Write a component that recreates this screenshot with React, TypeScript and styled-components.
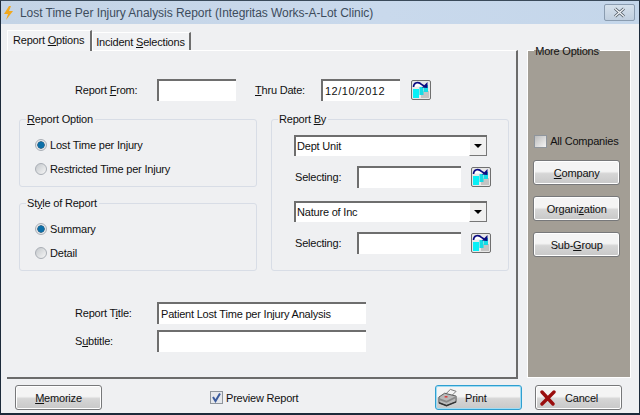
import { createGlobalStyle, styled } from 'styled-components';

const GlobalStyle = createGlobalStyle`
  html, body { margin: 0; padding: 0; background: #eef0f2; }
  * { box-sizing: border-box; }
  body { font-family: "Liberation Sans", Arial, sans-serif; font-size: 11px; letter-spacing: -0.2px; color: #111; }
`;

const Window = styled.div`
  width: 640px;
  height: 415px;
  overflow: hidden;
  display: flex;
  flex-direction: column;
  background: #eff0f2;
  border-left: 1px solid #1c2a3a;
  border-right: 1px solid #1c2a3a;
  border-bottom: 2px solid #1c2a3a;
  border-top: 1px solid #3a4a5a;
`;

const TitleBar = styled.div`
  height: 23px;
  flex: none;
  display: flex;
  align-items: center;
  padding: 0 4px 0 2px;
  background: linear-gradient(90deg, #c4d4e6 0%, #c9d9ec 60%, #c4d6ea 100%);
`;

const TitleText = styled.span`
  margin-left: 6px;
  font-size: 12px;
  letter-spacing: -0.05px;
  color: #3d4c5c;
`;

const CloseButton = styled.div`
  margin-left: auto;
  width: 31px;
  height: 17px;
  display: flex;
  align-items: center;
  justify-content: center;
  border: 1px solid #8a9cb0;
  border-radius: 2px;
  background: linear-gradient(#d6e1ec, #c0cfdf);
`;

const Content = styled.div`
  display: flex;
  padding: 6px 8px 0 5px;
  flex: none;
  height: 355px;
`;

const TabArea = styled.div`
  width: 513px;
  display: flex;
  flex-direction: column;
`;

const TabStrip = styled.div`
  display: flex;
  height: 20px;
  padding-left: 1px;
`;

const Tab = styled.div<{ $active?: boolean }>`
  display: flex;
  align-items: ${(p) => (p.$active ? 'flex-start' : 'flex-end')};
  height: ${(p) => (p.$active ? '21px' : '18px')};
  margin-top: ${(p) => (p.$active ? '0' : '2px')};
  padding: ${(p) => (p.$active ? '2px 6px 0 5px' : '0 4px 1px 3px')};
  background: #f1f2f4;
  border-top: 1px solid #fff;
  border-left: 1px solid #fff;
  border-right: 2px solid #6e6e6e;
  white-space: nowrap;
  line-height: 14px;
  position: relative;
  z-index: ${(p) => (p.$active ? 1 : 0)};
`;

const TabPage = styled.div`
  flex: 1;
  border-top: 1px solid #fff;
  border-right: 2px solid #6b6b6b;
  border-bottom: 2px solid #6b6b6b;
  margin-left: 1px;
  padding: 28px 0 0 0;
  display: flex;
  flex-direction: column;
`;

const FieldRow = styled.div`
  display: flex;
  align-items: center;
  height: 22px;
  padding-left: 68px;
`;

const Label = styled.label<{ $width?: number; $indent?: number }>`
  width: ${(p) => p.$width ?? 82}px;
  padding-left: ${(p) => p.$indent ?? 0}px;
  flex: none;
  line-height: 14px;
  white-space: nowrap;
`;

const TextBox = styled.div<{ $width: number; $track?: number }>`
  width: ${(p) => p.$width}px;
  height: 22px;
  flex: none;
  padding: 2px 0 0 2px;
  background: #fff;
  border-top: 2px solid #6e6e6e;
  border-left: 2px solid #6e6e6e;
  line-height: 16px;
  letter-spacing: ${(p) => p.$track ?? -0.2}px;
  white-space: nowrap;
  overflow: hidden;
`;

const GroupGrid = styled.div`
  display: grid;
  grid-template-columns: 238px 238px;
  column-gap: 14px;
  margin: 11px 0 0 12px;
`;

const GroupStack = styled.div`
  display: flex;
  flex-direction: column;
  gap: 9px;
`;

const Group = styled.fieldset<{ $height: number }>`
  margin: 0;
  height: ${(p) => p.$height}px;
  padding: 7px 0 0 15px;
  border: 1px solid #d8dde6;
  border-radius: 3px;
  min-width: 0;
`;

const GroupTitle = styled.legend`
  margin-left: -9px;
  padding: 0 2px 0 1px;
  line-height: 14px;
  height: 14px;
`;

const RadioRow = styled.div`
  display: flex;
  align-items: center;
  height: 24px;
  gap: 3px;
`;

const Radio = styled.span<{ $checked?: boolean }>`
  width: 12px;
  height: 12px;
  border-radius: 50%;
  flex: none;
  border: 1px solid #a9aeb5;
  background: ${(p) =>
    p.$checked
      ? 'radial-gradient(circle, #0c6fa8 0 3px, #2b5a78 3.4px, #e4e8ec 4px)'
      : 'linear-gradient(135deg, #c4c8cc, #f6f6f6)'};
`;

const ByRow = styled.div`
  display: flex;
  align-items: center;
  margin-top: 10px;
`;

const ComboBox = styled.div<{ $top: number }>`
  width: 193px;
  height: 21px;
  margin: ${(p) => p.$top}px 0 0 7px;
  display: flex;
  background: #fff;
  border-top: 2px solid #6e6e6e;
  border-left: 2px solid #6e6e6e;
  padding-left: 1px;
  line-height: 18px;
  justify-content: space-between;
`;

const ComboArrow = styled.div`
  width: 18px;
  height: 19px;
  background: #f0f0f0;
  border-right: 1px solid #777;
  border-bottom: 1px solid #777;
  border-left: 1px solid #fff;
  display: flex;
  align-items: center;
  justify-content: center;
`;

const ComboCaret = styled.span`
  border-left: 4px solid transparent;
  border-right: 4px solid transparent;
  border-top: 4px solid #000;
`;

const PickerButton = styled.button<{ $gap: number }>`
  width: 20px;
  height: 20px;
  flex: none;
  margin-left: ${(p) => p.$gap}px;
  padding: 0;
  border: 1px solid #6f6f6f;
  border-radius: 2px;
  background: #e8e8e8;
  display: block;
`;

const TitleFields = styled.div`
  margin-top: 31px;
  display: flex;
  flex-direction: column;
  gap: 6px;
`;

const SideArea = styled.div`
  margin-left: 9px;
  width: 104px;
  padding-top: 14px;
`;

const SidePanel = styled.fieldset`
  margin: 0;
  height: 334px;
  min-width: 0;
  padding: 0 0 0 6px;
  border: 1px solid #fff;
  background: #a39e95;
`;

const SideTitle = styled.legend`
  padding: 0 1px;
  line-height: 14px;
  height: 12px;
`;

const CheckRow = styled.div<{ $top?: number }>`
  display: flex;
  align-items: center;
  gap: 3px;
  margin-top: ${(p) => p.$top ?? 0}px;
  line-height: 14px;
`;

const CheckBox = styled.span<{ $tone: 'pale' | 'light' }>`
  width: 13px;
  height: 13px;
  flex: none;
  display: flex;
  align-items: center;
  justify-content: center;
  border: 1px solid #8f959c;
  background: ${(p) => (p.$tone === 'pale' ? 'linear-gradient(135deg, #bcbcbc, #f4f4f4)' : '#e6e8ec')};
`;

const SideButtons = styled.div`
  margin: 12px 0 0 -1px;
  display: flex;
  flex-direction: column;
  gap: 11px;
`;

const PushButton = styled.button<{ $focus?: boolean; $iconPad?: number; $gap?: number }>`
  width: 87px;
  height: 25px;
  padding: 0 0 0 ${(p) => p.$iconPad ?? 0}px;
  display: flex;
  align-items: center;
  justify-content: ${(p) => (p.$iconPad === undefined ? 'center' : 'flex-start')};
  gap: ${(p) => p.$gap ?? 0}px;
  font: inherit;
  letter-spacing: inherit;
  color: #111;
  border: 1px solid ${(p) => (p.$focus ? '#2f9fd0' : '#77787a')};
  border-radius: 3px;
  background: linear-gradient(#f4f4f4 0 45%, #d6d6d6 55%, #c8c8c8 100%);
  box-shadow: ${(p) => (p.$focus ? 'inset 0 0 0 1px #9fdcf4' : 'inset 0 0 0 1px #fff')};
`;

const Footer = styled.div`
  display: flex;
  align-items: center;
  height: 25px;
  margin-top: 6px;
  padding-left: 14px;
`;

const PreviewCheck = styled(CheckRow)`
  margin-left: 108px;
  width: 225px;
`;

const CancelSlot = styled.div`
  margin-left: 13px;
`;

function Picker({ gap }: { gap: number }) {
  return (
    <PickerButton $gap={gap} type="button">
      <svg width="18" height="18" viewBox="0 0 18 18">
        <rect x="9" y="10" width="8" height="7" fill="#c4c4c4" />
        <rect x="12" y="4" width="4" height="7" fill="#14dce6" />
        <rect x="7.5" y="6" width="4" height="8" fill="#14dce6" />
        <rect x="1" y="8" width="6" height="9" fill="#08f0f6" />
        <path d="M1.5 6 C1.5 1 7 0.5 9.5 3.5 L12 5" fill="#fff" stroke="#0a0a80" strokeWidth="1.6" />
        <path d="M15.5 1 L15.5 7 L10 6.5 Z" fill="#0a0a80" />
      </svg>
    </PickerButton>
  );
}

function PrintIcon() {
  return (
    <svg width="21" height="20" viewBox="0 0 22 20">
      <path d="M8 7 L14 1 L20 3 L14 9 Z" fill="#f4f4f4" stroke="#777" />
      <path d="M2 9 L8 5 L20 8 L20 14 L10 18 L2 15 Z" fill="#b9b9b9" stroke="#555" />
      <path d="M2 10 L10 13 L20 8 L20 10 L10 15 L2 12 Z" fill="#8b8b8b" />
      <path d="M2 15 L10 18 L20 14" fill="none" stroke="#333" strokeWidth="1.5" />
      <rect x="8" y="8" width="3" height="1.5" fill="#d33" />
    </svg>
  );
}

function CancelIcon() {
  return (
    <svg width="16" height="16" viewBox="0 0 16 16">
      <path d="M2 2 L13 14 M14 2 L2 14" stroke="#9a0d0d" strokeWidth="3.4" strokeLinecap="round" />
    </svg>
  );
}

function Bolt() {
  return (
    <svg width="11" height="14" viewBox="0 0 11 14">
      <path d="M6 0 L1 8 L5 8 L3 14 L10 5 L6 5 L8 0 Z" fill="#f0a81e" />
    </svg>
  );
}

export default function App() {
  return (
    <>
      <GlobalStyle />
      <Window>
        <TitleBar>
          <Bolt />
          <TitleText>Lost Time Per Injury Analysis Report (Integritas Works-A-Lot Clinic)</TitleText>
          <CloseButton>
            <svg width="13" height="11" viewBox="0 0 13 11">
              <path d="M2 1.5 L11 9.5 M11 1.5 L2 9.5" stroke="#4a5560" strokeWidth="3" />
              <path d="M2 1.5 L11 9.5 M11 1.5 L2 9.5" stroke="#f2f5f8" strokeWidth="1.4" />
            </svg>
          </CloseButton>
        </TitleBar>
        <Content>
          <TabArea>
            <TabStrip>
              <Tab $active>
                <span>Report <u>O</u>ptions</span>
              </Tab>
              <Tab>
                <span>Incident <u>S</u>elections</span>
              </Tab>
            </TabStrip>
            <TabPage>
              <FieldRow>
                <Label>Report <u>F</u>rom:</Label>
                <TextBox $width={79} />
                <Label $width={85} $indent={19}><u>T</u>hru Date:</Label>
                <TextBox $width={79} $track={0.5}>12/10/2012</TextBox>
                <Picker gap={11} />
              </FieldRow>
              <GroupGrid>
                <GroupStack>
                  <Group $height={75}>
                    <GroupTitle><u>R</u>eport Option</GroupTitle>
                    <RadioRow><Radio $checked />Lost Time per Injury</RadioRow>
                    <RadioRow><Radio />Restricted Time per Injury</RadioRow>
                  </Group>
                  <Group $height={75}>
                    <GroupTitle>St<u>y</u>le of Report</GroupTitle>
                    <RadioRow><Radio $checked />Summary</RadioRow>
                    <RadioRow><Radio />Detail</RadioRow>
                  </Group>
                </GroupStack>
                <Group $height={159}>
                  <GroupTitle>Report <u>B</u>y</GroupTitle>
                  <ComboBox $top={2}>
                    Dept Unit
                    <ComboArrow><ComboCaret /></ComboArrow>
                  </ComboBox>
                  <ByRow>
                    <Label $width={70} $indent={8}>Selecting:</Label>
                    <TextBox $width={104} />
                    <Picker gap={10} />
                  </ByRow>
                  <ComboBox $top={13}>
                    Nature of Inc
                    <ComboArrow><ComboCaret /></ComboArrow>
                  </ComboBox>
                  <ByRow>
                    <Label $width={70} $indent={8}>Selecting:</Label>
                    <TextBox $width={104} />
                    <Picker gap={10} />
                  </ByRow>
                </Group>
              </GroupGrid>
              <TitleFields>
                <FieldRow>
                  <Label>Report T<u>i</u>tle:</Label>
                  <TextBox $width={209}>Patient Lost Time per Injury Analysis</TextBox>
                </FieldRow>
                <FieldRow>
                  <Label>S<u>u</u>btitle:</Label>
                  <TextBox $width={209} />
                </FieldRow>
              </TitleFields>
            </TabPage>
          </TabArea>
          <SideArea>
            <SidePanel>
              <SideTitle>More Options</SideTitle>
              <CheckRow $top={78}>
                <CheckBox $tone="pale" />
                All Companies
              </CheckRow>
              <SideButtons>
                <PushButton><span><u>C</u>ompany</span></PushButton>
                <PushButton><span>Organi<u>z</u>ation</span></PushButton>
                <PushButton><span>Sub-<u>G</u>roup</span></PushButton>
              </SideButtons>
            </SidePanel>
          </SideArea>
        </Content>
        <Footer>
          <PushButton><span><u>M</u>emorize</span></PushButton>
          <PreviewCheck>
            <CheckBox $tone="light">
              <svg width="11" height="11" viewBox="0 0 11 11">
                <path d="M2 5 L4.5 9 L9 1.5" fill="none" stroke="#3a5a9c" strokeWidth="2" />
              </svg>
            </CheckBox>
            Preview Report
          </PreviewCheck>
          <PushButton $focus $iconPad={1} $gap={7}><PrintIcon /><span>Print</span></PushButton>
          <CancelSlot>
            <PushButton $iconPad={4} $gap={9}><CancelIcon /><span>Cancel</span></PushButton>
          </CancelSlot>
        </Footer>
      </Window>
    </>
  );
}
